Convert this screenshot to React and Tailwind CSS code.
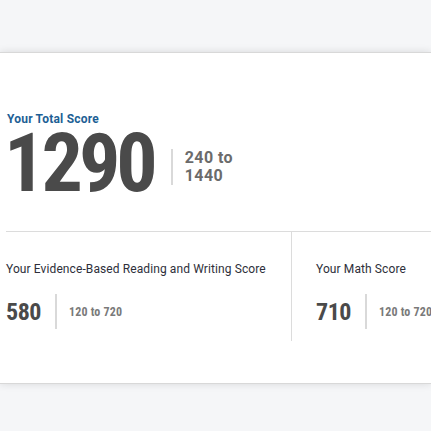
const num = { fontFamily: '"Roboto Condensed", Roboto, sans-serif' }

function SectionScore({ label, score, range }) {
  return (
    <div>
      <p className="text-[12px] leading-4 tracking-[0.1px] whitespace-nowrap text-[#2e2f3a]">{label}</p>
      <div className="mt-[17px] flex items-center whitespace-nowrap">
        <span className="text-[24px] leading-6 font-bold tracking-[-0.5px] text-[#4a4a4a]" style={num}>{score}</span>
        <span className="ml-[14px] h-[35px] w-[2px] shrink-0 bg-[#d9d9d9]" />
        <span className="ml-[12px] shrink-0 text-[12px] leading-4 font-bold tracking-[0.2px] text-[#7a7a7a]" style={num}>{range}</span>
      </div>
    </div>
  )
}

export default function App() {
  return (
    <div className="min-h-[431px] overflow-hidden bg-[#f5f6f8] pt-[52px]" style={{ fontFamily: 'Roboto, "Liberation Sans", sans-serif' }}>
      <div className="bg-white border-y border-[#d8d8d8] shadow-[0_0_8px_rgba(0,0,0,0.12)] pb-[42px]">
        <div className="pl-[6px] pt-[58px]">
          <div className="pl-px pb-[32px]">
            <p className="text-[12px] leading-4 font-bold tracking-[0.2px] text-[#1d5f95]">Your Total Score</p>
            <div className="flex items-start">
              <span className="-ml-[3px] text-[82px] leading-[72px] font-bold tracking-[-4px] text-[#4a4a4a]" style={num}>1290</span>
              <div className="ml-[17px] mt-[22px] border-l-2 border-[#d9d9d9] pl-3 text-[16px] leading-[18px] font-bold tracking-[0.4px] text-[#6b6b6b]">
                <div>240 to</div>
                <div>1440</div>
              </div>
            </div>
          </div>
          <div className="flex border-t border-[#dcdcdc]">
            <div className="w-[285px] shrink-0 pt-[29px] pb-[12px]">
              <SectionScore label="Your Evidence-Based Reading and Writing Score" score="580" range="120 to 720" />
            </div>
            <div className="flex-1 min-w-0 border-l border-[#dcdcdc] pl-[24px] pt-[29px] pb-[12px]">
              <SectionScore label="Your Math Score" score="710" range="120 to 720" />
            </div>
          </div>
        </div>
      </div>
    </div>
  )
}
